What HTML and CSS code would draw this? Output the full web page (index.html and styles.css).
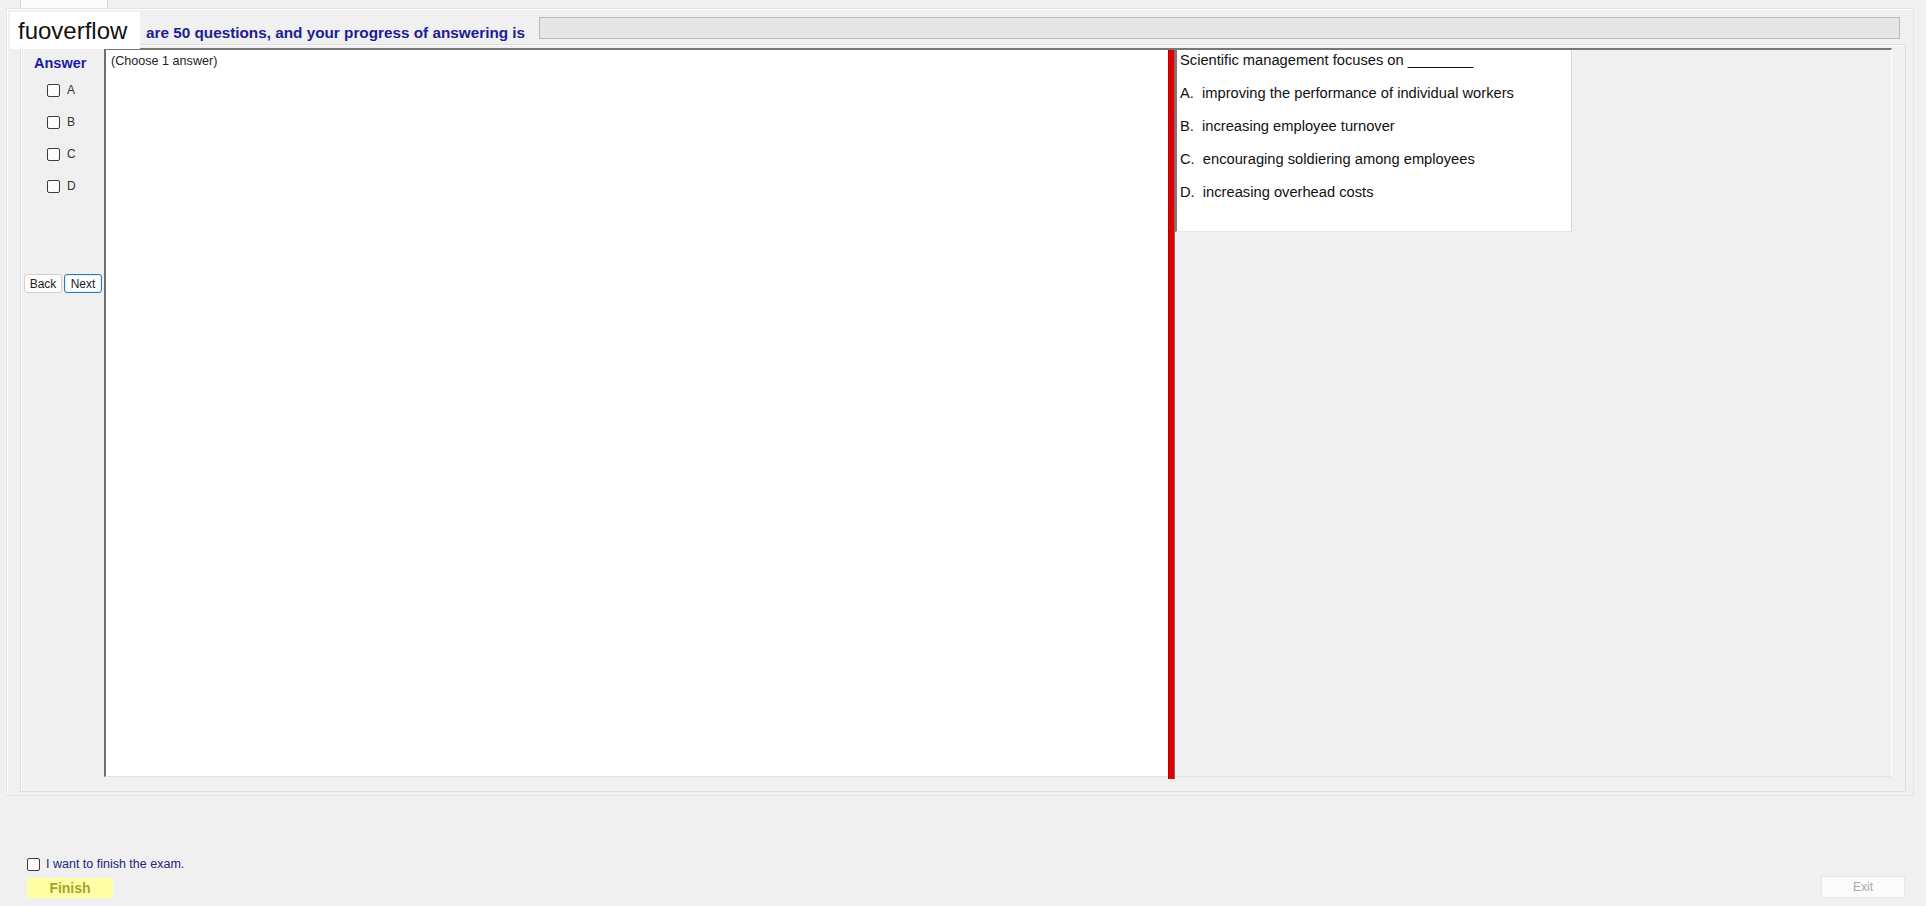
FILE: index.html
```html
<!DOCTYPE html>
<html lang="en">
<head>
    <meta charset="UTF-8">
    <meta name="viewport" content="width=device-width, initial-scale=1.0">
    <title>Exam</title>
    <link rel="stylesheet" href="styles.css">
</head>
<body>

    <div id="tabs">
        <div class="tab-strip">
            <div class="tab"></div>
        </div>
        <div class="tab-page">
            <div class="brand">fuoverflow</div>

            <div class="header">
                <div class="header-text">are 50 questions, and your progress of answering is</div>
                <div class="progress"></div>
            </div>

            <div class="group">
                <div class="answer-col">
                    <div class="answer-title">Answer</div>
                    <label class="option"><input type="checkbox"><span>A</span></label>
                    <label class="option"><input type="checkbox"><span>B</span></label>
                    <label class="option"><input type="checkbox"><span>C</span></label>
                    <label class="option"><input type="checkbox"><span>D</span></label>
                    <div class="nav">
                        <button class="btn">Back</button>
                        <button class="btn btn-focus">Next</button>
                    </div>
                </div>

                <div class="split">
                    <div class="pane-left">(Choose 1 answer)</div>
                    <div class="splitter"></div>
                    <div class="pane-right">
                        <div class="question">
                            <p>Scientific management focuses on ________</p>
                            <p>A.  improving the performance of individual workers</p>
                            <p>B.  increasing employee turnover</p>
                            <p>C.  encouraging soldiering among employees</p>
                            <p>D.  increasing overhead costs</p>
                        </div>
                    </div>
                </div>
            </div>
        </div>
    </div>

    <div id="footer">
        <div class="finish-box">
            <label class="finish-check"><input type="checkbox"><span>I want to finish the exam.</span></label>
            <button class="finish">Finish</button>
        </div>
        <button class="exit">Exit</button>
    </div>

</body>
</html>
```

FILE: styles.css
```css
* {
    box-sizing: border-box;
}

body {
    margin: 0;
    height: 906px;
    background-color: #f0f0f0;
    font-family: "Liberation Sans", Arial, sans-serif;
    display: flex;
    flex-direction: column;
    overflow: hidden;
}

#tabs {
    margin: 0 12px 0 6px;
}

.tab-strip {
    height: 8px;
    padding-left: 14px;
}

.tab {
    width: 88px;
    height: 8px;
    background-color: #fbfbfb;
    border: 1px solid #d9d9d9;
    border-top: none;
    border-bottom: none;
}

.tab-page {
    position: relative;
    height: 788px;
    border: 1px solid #e4e4e4;
    box-shadow: inset 1px 1px #fff;
}

/* watermark that sits over the header */
.brand {
    position: absolute;
    left: 3px;
    top: 3px;
    width: 130px;
    height: 37px;
    background-color: #fff;
    font-size: 24px;
    line-height: 37px;
    padding-left: 8px;
    color: #111;
    z-index: 2;
}

.header {
    display: flex;
    align-items: flex-start;
    height: 35px;
    padding: 8px 13px 0 139px;
    gap: 14px;
}

.header-text {
    font-size: 15.3px;
    font-weight: bold;
    color: #1d1d94;
    line-height: 22px;
    padding-top: 5px;
    white-space: nowrap;
}

.progress {
    flex: 1;
    height: 22px;
    background-color: #e6e6e6;
    border: 1px solid #bcbcbc;
}

.group {
    display: flex;
    height: 748px;
    margin: 0 0 0 13px;
    width: 1886px;
    border: 1px solid #dedede;
    box-shadow: inset 1px 1px #fff;
    padding: 3px 13px 0 0;
}

.answer-col {
    width: 83px;
    flex-shrink: 0;
    padding-top: 7px;
}

.answer-title {
    font-size: 14.5px;
    font-weight: bold;
    color: #1a1aa6;
    line-height: 17px;
    padding-left: 13px;
    margin-bottom: 2px;
}

.option {
    display: flex;
    align-items: center;
    height: 32px;
    padding-left: 26px;
    gap: 7px;
    font-size: 12px;
    color: #333;
}

input[type="checkbox"] {
    appearance: none;
    margin: 0;
    width: 13px;
    height: 13px;
    border: 1px solid #3c3c3c;
    border-radius: 2px;
    background-color: #fdfdfd;
}

.nav {
    display: flex;
    gap: 2px;
    margin-top: 72px;
    padding-left: 3px;
}

.btn {
    width: 38px;
    height: 19px;
    padding: 0;
    font-family: "Liberation Sans", Arial, sans-serif;
    font-size: 12px;
    color: #222;
    background-color: #fdfdfd;
    border: 1px solid #d0d0d0;
    border-radius: 3px;
}

.btn-focus {
    border-color: #2a7ab8;
    box-shadow: inset 0 0 0 1px #e3eef8;
}

.split {
    display: flex;
    width: 1788px;
    height: 729px;
    border-top: 2px solid #777;
    border-left: 2px solid #6f6f6f;
    border-bottom: 1px solid #e3e3e3;
    border-right: 1px solid #fff;
}

.pane-left {
    width: 1062px;
    background-color: #fff;
    font-size: 12.6px;
    line-height: 15px;
    color: #222;
    padding: 4px 0 0 5px;
}

.splitter {
    width: 7px;
    margin-bottom: -3px;
    background-color: #e10000;
    border-left: 1px solid #b80000;
    border-right: 1px solid #8a6060;
}

.pane-right {
    flex: 1;
    background-color: #f0f0f0;
}

.question {
    width: 397px;
    height: 182px;
    background-color: #fff;
    border-left: 2px solid #7a7a7a;
    border-right: 1px solid #d6d6d6;
    border-bottom: 1px solid #e6e6e6;
    padding: 1px 0 0 3px;
}

.question p {
    margin: 0 0 15px 0;
    font-size: 14.7px;
    line-height: 18px;
    color: #111;
    white-space: pre;
}

#footer {
    margin-top: auto;
    display: flex;
    justify-content: space-between;
    align-items: flex-end;
    padding: 0 21px 8px 27px;
}

.finish-box {
    display: flex;
    flex-direction: column;
    gap: 6px;
}

.finish-check {
    display: flex;
    align-items: center;
    gap: 6px;
    font-size: 12.5px;
    color: #23237c;
    height: 16px;
}

.finish {
    width: 86px;
    height: 20px;
    padding: 0;
    border: none;
    background-color: #ffffa6;
    font-family: "Liberation Sans", Arial, sans-serif;
    font-size: 14px;
    font-weight: bold;
    color: #a3a32a;
}

.exit {
    width: 84px;
    height: 22px;
    padding: 0;
    background-color: #fbfbfb;
    border: 1px solid #e6e6e6;
    font-family: "Liberation Sans", Arial, sans-serif;
    font-size: 12px;
    color: #a8a8a8;
}
```
